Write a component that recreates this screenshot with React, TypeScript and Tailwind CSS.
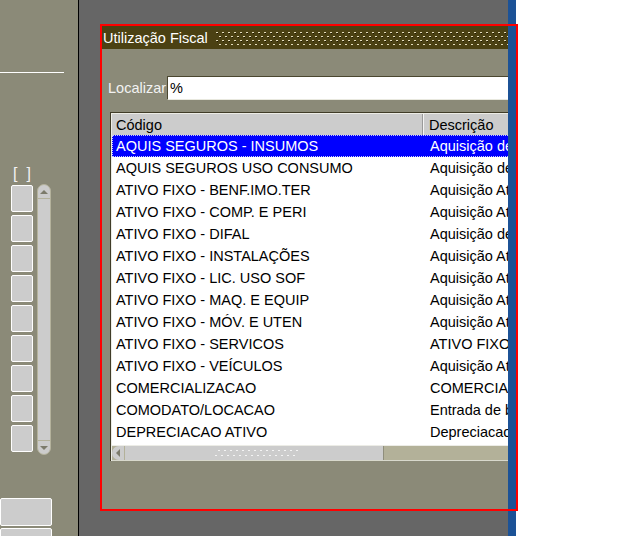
import React from 'react';

const rows: [string, string][] = [
  ['AQUIS SEGUROS - INSUMOS', 'Aquisição de Seguros - Insumos'],
  ['AQUIS SEGUROS USO CONSUMO', 'Aquisição de Seguros Uso e Consumo'],
  ['ATIVO FIXO - BENF.IMO.TER', 'Aquisição Ativo Fixo Benfeitorias'],
  ['ATIVO FIXO - COMP. E PERI', 'Aquisição Ativo Fixo Computadores'],
  ['ATIVO FIXO - DIFAL', 'Aquisição de Ativo Fixo - Difal'],
  ['ATIVO FIXO - INSTALAÇÕES', 'Aquisição Ativo Fixo Instalações'],
  ['ATIVO FIXO - LIC. USO SOF', 'Aquisição Ativo Fixo Licenças'],
  ['ATIVO FIXO - MAQ. E EQUIP', 'Aquisição Ativo Fixo Máquinas'],
  ['ATIVO FIXO - MÓV. E UTEN', 'Aquisição Ativo Fixo Móveis'],
  ['ATIVO FIXO - SERVICOS', 'ATIVO FIXO - SERVICOS'],
  ['ATIVO FIXO - VEÍCULOS', 'Aquisição Ativo Fixo Veículos'],
  ['COMERCIALIZACAO', 'COMERCIALIZACAO'],
  ['COMODATO/LOCACAO', 'Entrada de bens em comodato'],
  ['DEPRECIACAO ATIVO', 'Depreciacao do Ativo'],
];

const TitleDots = () => (
  <svg width="300" height="14" className="block">
    <defs>
      <pattern id="tdots" width="6" height="8" patternUnits="userSpaceOnUse">
        <rect x="1" y="1" width="2" height="1" fill="#e4dcbc" />
        <rect x="2" y="2" width="1" height="1" fill="#1c1600" />
        <rect x="4" y="5" width="2" height="1" fill="#e4dcbc" />
        <rect x="5" y="6" width="1" height="1" fill="#1c1600" />
      </pattern>
    </defs>
    <rect width="300" height="14" fill="url(#tdots)" />
  </svg>
);

const GripDots = () => (
  <svg width="86" height="8" className="block">
    {Array.from({ length: 14 }).map((_, i) => (
      <React.Fragment key={i}>
        <rect x={3 + i * 6} y="1" width="2" height="1" fill="#f4f4f4" />
        <rect x={i * 6} y="6" width="2" height="1" fill="#f4f4f4" />
      </React.Fragment>
    ))}
  </svg>
);

const LeftPanel = () => (
  <div className="w-[79px] shrink-0 bg-[#8b8a78] border-r border-black flex flex-col">
    <div className="mt-[72px] h-px w-[64px] shrink-0 bg-white" />
    <div className="mt-[93px] ml-[13px] w-[18px] h-[16px] shrink-0 flex justify-between text-[16px] leading-[16px] text-[#f2f2f2]">
      <span>[</span>
      <span>]</span>
    </div>
    <div className="mt-[2px] flex shrink-0">
      <div className="ml-[11px] pt-[1px] flex flex-col gap-[3px]">
        {Array.from({ length: 9 }).map((_, i) => (
          <div key={i} className="w-[22px] h-[27px] shrink-0 rounded-[2px] border border-white bg-[#cccccc]" />
        ))}
      </div>
      <div className="ml-[4px] w-[14px] h-[271px] rounded-[7px] border border-[#b4b29c] bg-[#cccccc] flex flex-col justify-between">
        <div className="h-[14px] border-b border-[#b4b29c] flex items-center justify-center">
          <svg width="8" height="4"><path d="M0 4 L4 0 L8 4 Z" fill="#7c7b6b" /></svg>
        </div>
        <div className="h-[14px] border-t border-[#b4b29c] flex items-center justify-center">
          <svg width="8" height="4"><path d="M0 0 L4 4 L8 0 Z" fill="#7c7b6b" /></svg>
        </div>
      </div>
    </div>
    <div className="mt-[43px] w-[52px] h-[28px] shrink-0 rounded-[2px] border border-white bg-[#cccccc]" />
    <div className="mt-[2px] w-[52px] h-[28px] shrink-0 rounded-[2px] border border-white bg-[#cccccc]" />
  </div>
);

const Dialog = () => (
  <div className="absolute left-[100px] top-[24px] w-[418px] h-[487px] border-2 border-[#ff0000] flex">
    <div className="flex-1 min-w-0 overflow-hidden bg-[#8b8a78] flex flex-col">
      <div className="h-[23px] shrink-0 bg-[#4b4113] flex items-center overflow-hidden">
        <span className="pl-[1px] text-white whitespace-nowrap leading-[16px]">Utilização Fiscal</span>
        <div className="ml-[7px] mt-[1px]">
          <TitleDots />
        </div>
      </div>

      <div className="mt-[27px] h-[24px] flex items-center shrink-0">
        <span className="ml-[6px] w-[59px] shrink-0 text-[#f2f2f2] leading-[16px] whitespace-nowrap">Localizar</span>
        <div className="w-[360px] h-[24px] shrink-0 bg-white border-t border-l border-[#4b4730] border-b border-b-[#e8e8de] flex items-center">
          <span className="pl-[2px] text-black leading-[16px]">%</span>
        </div>
      </div>

      <div className="mt-[12px] ml-[8px] w-[420px] shrink-0 border-t border-l border-[#403c28]">
        <div className="border-t border-l border-[#ecece6] bg-white">
          <div className="h-[21px] bg-[#cccccc] flex text-black">
            <div className="w-[311px] shrink-0 pl-[4px] flex items-center border-r border-[#9a9a9a] leading-[16px]">Código</div>
            <div className="w-px bg-[#f4f4f4]" />
            <div className="pl-[5px] flex items-center leading-[16px]">Descrição</div>
          </div>
          {rows.map(([code, desc], i) => (
            <div
              key={code}
              className={
                i === 0
                  ? 'h-[22px] flex items-center bg-[#0000ff] text-white border border-dotted border-[#c8c8ff] whitespace-nowrap'
                  : 'h-[22px] flex items-center text-black whitespace-nowrap'
              }
            >
              <div className={i === 0 ? 'w-[317px] shrink-0 pl-[3px] leading-[16px]' : 'w-[318px] shrink-0 pl-[4px] leading-[16px]'}>{code}</div>
              <div className="leading-[16px]">{desc}</div>
            </div>
          ))}
          <div className="h-[2px]" />
          <div className="h-[16px] flex bg-[#b3b199] border-t border-[#ecece6] border-b border-b-[#d8d8cc]">
            <div className="w-[13px] shrink-0 rounded-l-[7px] bg-[#cccccc] border-r border-[#b3b199] flex items-center justify-center">
              <svg width="4" height="8"><path d="M4 0 L0 4 L4 8 Z" fill="#7c7b6b" /></svg>
            </div>
            <div className="w-[259px] shrink-0 bg-[#cccccc] border-r border-[#8f8e7c] flex items-center justify-center pl-[8px]">
              <GripDots />
            </div>
          </div>
        </div>
      </div>
    </div>
    <div className="w-[8px] shrink-0 bg-[#1c5296]" />
  </div>
);

const App: React.FC = () => {
  return (
    <div className="relative w-[617px] h-[536px] overflow-hidden flex font-['Liberation_Sans',Arial,sans-serif] text-[14.5px]">
      <LeftPanel />
      <div className="w-[429px] shrink-0 bg-[#666666]" />
      <div className="w-[8px] shrink-0 bg-[#1c5296]" />
      <div className="flex-1 bg-white" />
      <Dialog />
    </div>
  );
};

export default App;
